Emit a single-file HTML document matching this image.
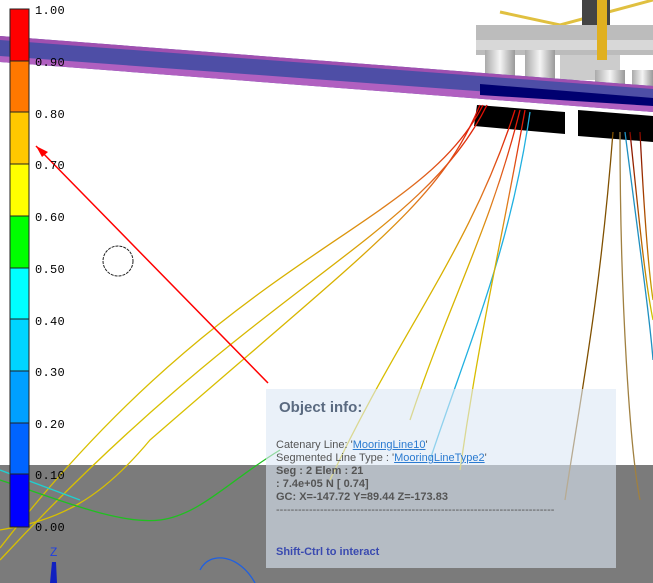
<!DOCTYPE html>
<html><head><meta charset="utf-8"><style>
html,body{margin:0;padding:0;width:653px;height:583px;overflow:hidden;background:#fff;font-family:"Liberation Sans",sans-serif}
svg{position:absolute;left:0;top:0}
.lbl{position:absolute;left:35px;font-family:"Liberation Mono",monospace;font-size:12px;color:#000;letter-spacing:0.3px}
#info{position:absolute;left:266px;top:389px;width:350px;height:179px;background:rgba(220,232,245,0.6);font-family:"Liberation Sans","DejaVu Sans",sans-serif;color:#555;font-size:11px}
#info .t{position:absolute;left:13px;top:10px;font-size:15px;font-weight:bold;color:#5a6a80}
#info .b{position:absolute;left:10px;top:50px;line-height:13px}
#info a{color:#2a7ad0;text-decoration:underline}
#info .s{position:absolute;left:10px;top:157px;color:#3a4ab0;font-weight:bold}
</style></head><body>
<svg width="653" height="583" viewBox="0 0 653 583">
<defs>
<linearGradient id="g1" gradientUnits="userSpaceOnUse" x1="0" y1="100" x2="0" y2="400"><stop offset="0" stop-color="#e00000"/><stop offset="0.3" stop-color="#e07020"/><stop offset="0.55" stop-color="#d8b000"/><stop offset="1" stop-color="#d8c000"/></linearGradient>
<linearGradient id="g2" gradientUnits="userSpaceOnUse" x1="0" y1="120" x2="0" y2="460"><stop offset="0" stop-color="#800000"/><stop offset="0.4" stop-color="#c07000"/><stop offset="0.6" stop-color="#d0d000"/><stop offset="0.75" stop-color="#10c010"/><stop offset="1" stop-color="#00b0d0"/></linearGradient>
<linearGradient id="col" x1="0" x2="1"><stop offset="0" stop-color="#aaa"/><stop offset="0.5" stop-color="#f4f4f4"/><stop offset="1" stop-color="#999"/></linearGradient>
</defs>
<rect x="0" y="465" width="653" height="118" fill="#7b7b7b"/>
<path d="M500,12 L560,25 L653,0" stroke="#e0c040" stroke-width="3" fill="none"/>
<rect x="582" y="0" width="28" height="28" fill="#444"/>
<rect x="476" y="25" width="177" height="30" fill="#bcbcbc"/>
<rect x="476" y="40" width="177" height="10" fill="#d8d8d8"/>
<rect x="485" y="50" width="30" height="45" fill="url(#col)"/>
<rect x="525" y="50" width="30" height="45" fill="url(#col)"/>
<rect x="560" y="55" width="60" height="25" fill="#ccc"/>
<rect x="595" y="70" width="30" height="30" fill="url(#col)"/>
<rect x="632" y="70" width="21" height="30" fill="url(#col)"/>
<rect x="597" y="0" width="10" height="60" fill="#e0b020"/>
<polygon points="0,36 653,86 653,112 0,62" fill="#4e4ea6"/>
<polygon points="0,36 653,86 653,89 0,40" fill="#a050b0"/>
<polygon points="0,56 653,104 653,112 0,62" fill="#b060c0"/>
<path d="M480,84 L653,98 L653,106 L480,95Z" fill="#000070"/>
<path d="M477,105 L565,112 L565,134 L474,126Z" fill="#000"/>
<path d="M578,110 L653,116 L653,142 L578,136Z" fill="#000"/>
<g fill="none" stroke-width="1.3">
<path d="M483,105 C420,230 230,250 0,548" stroke="url(#g1)"/>
<path d="M487,105 C420,240 260,280 0,560" stroke="url(#g1)"/>
<path d="M480,105 C440,200 380,240 150,440 C100,500 60,520 0,530" stroke="url(#g1)"/>
<path d="M515,110 C470,250 400,330 330,480" stroke="url(#g1)"/>
<path d="M520,110 C490,230 450,300 410,420" stroke="url(#g1)"/>
<path d="M530,112 C510,250 470,340 430,460" stroke="#20b0e0"/>
<path d="M525,110 C500,250 480,330 460,470" stroke="url(#g1)"/>
<path d="M613,132 C600,300 580,400 565,500" stroke="#805000"/>
<path d="M620,132 C620,300 630,450 640,500" stroke="#a08040"/>
<path d="M625,132 C640,250 650,320 653,360" stroke="#2090c0"/>
<path d="M630,132 C640,230 645,280 653,320" stroke="url(#g2)"/>
<path d="M640,132 C645,230 650,280 653,300" stroke="url(#g2)"/>
<path d="M0,480 C60,500 120,525 160,520 C200,515 230,480 280,450" stroke="#20c020"/>
<path d="M0,470 L80,500" stroke="#20d0d0"/>
<path d="M200,570 C210,550 240,555 255,583" stroke="#2060e0"/>
</g>
<line x1="268" y1="383" x2="36" y2="146" stroke="#f00" stroke-width="1.5"/>
<polygon points="36,146 48,152 42,157" fill="#f00"/>
<circle cx="118" cy="261" r="15" fill="none" stroke="#222" stroke-dasharray="3,1"/>
<path d="M50,583 L52,562 L56,562 L57,583Z" fill="#1020c0"/>
<text x="50" y="556" font-size="12" fill="#2040e0" font-family="Liberation Sans">Z</text>
<g stroke="#222" stroke-width="1">
<rect x="10" y="9" width="19" height="52" fill="#ff0000"/>
<rect x="10" y="61" width="19" height="51" fill="#ff7800"/>
<rect x="10" y="112" width="19" height="52" fill="#ffc800"/>
<rect x="10" y="164" width="19" height="52" fill="#ffff00"/>
<rect x="10" y="216" width="19" height="52" fill="#00ff00"/>
<rect x="10" y="268" width="19" height="51" fill="#00ffff"/>
<rect x="10" y="319" width="19" height="52" fill="#00d4ff"/>
<rect x="10" y="371" width="19" height="52" fill="#00a0ff"/>
<rect x="10" y="423" width="19" height="51" fill="#0064ff"/>
<rect x="10" y="474" width="19" height="53" fill="#0000ff"/>
</g>
</svg>
<div class="lbl" style="top:4px">1.00</div>
<div class="lbl" style="top:56px">0.90</div>
<div class="lbl" style="top:108px">0.80</div>
<div class="lbl" style="top:159px">0.70</div>
<div class="lbl" style="top:211px">0.60</div>
<div class="lbl" style="top:263px">0.50</div>
<div class="lbl" style="top:315px">0.40</div>
<div class="lbl" style="top:366px">0.30</div>
<div class="lbl" style="top:418px">0.20</div>
<div class="lbl" style="top:469px">0.10</div>
<div class="lbl" style="top:521px">0.00</div>
<div id="info">
<div class="t">Object info:</div>
<div class="b">Catenary Line: '<a>MooringLine10</a>'<br>Segmented Line Type : '<a>MooringLineType2</a>'<br><b>Seg : 2 Elem : 21<br>: 7.4e+05 N [ 0.74]<br>GC: X=-147.72 Y=89.44 Z=-173.83</b><br>----------------------------------------------------------------------------</div>
<div class="s">Shift-Ctrl to interact</div>
</div>
</body></html>
